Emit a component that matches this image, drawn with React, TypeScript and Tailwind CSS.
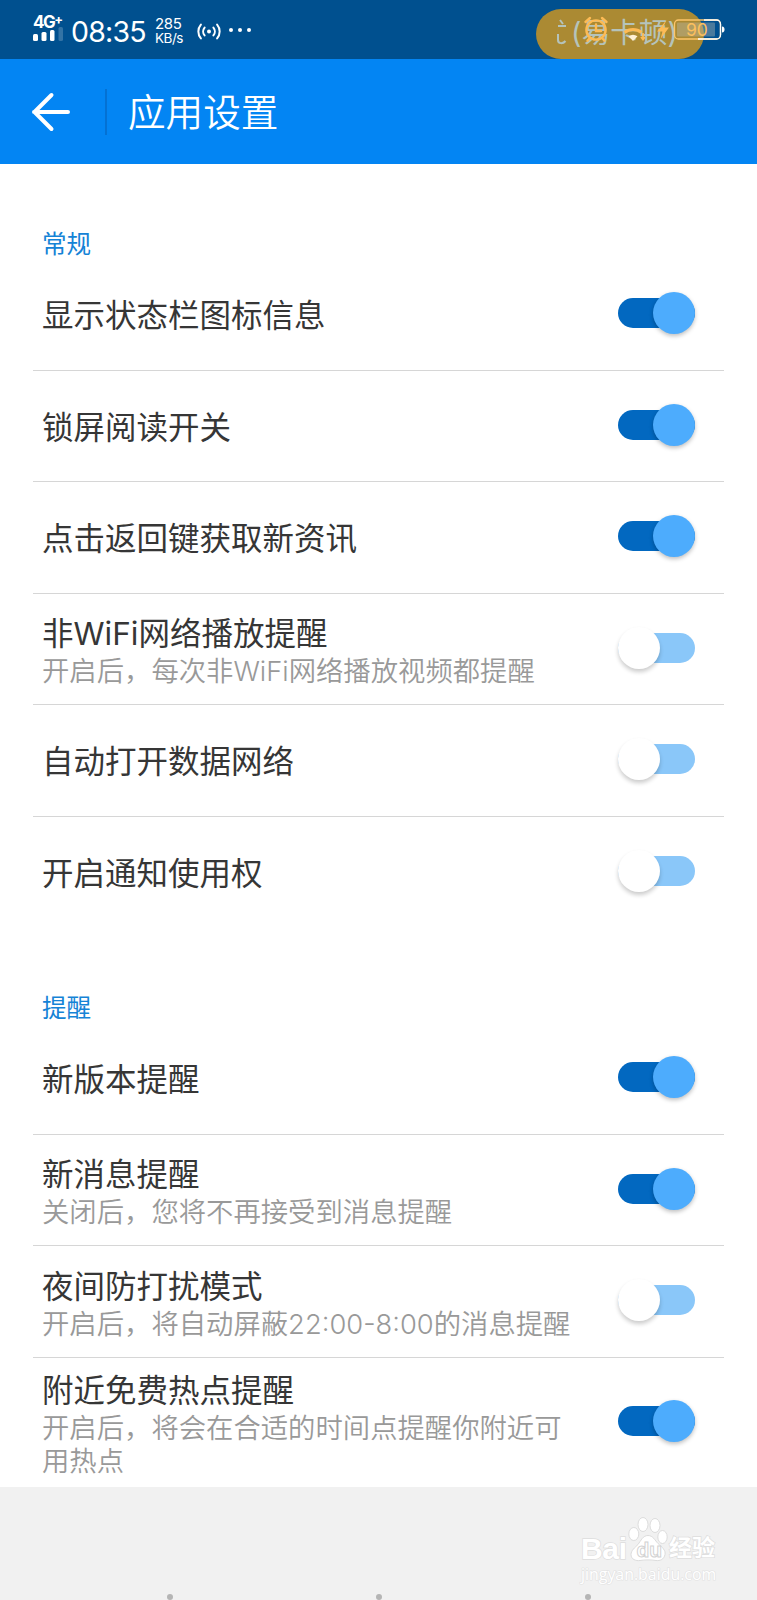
import { useState } from "react";

interface SettingItem {
  id: string;
  title: string;
  description?: string;
  enabled: boolean;
}

interface SettingSection {
  title: string;
  items: SettingItem[];
}

const sections: SettingSection[] = [
  {
    title: "常规",
    items: [
      { id: "status-icon", title: "显示状态栏图标信息", enabled: true },
      { id: "lock-read", title: "锁屏阅读开关", enabled: true },
      { id: "back-news", title: "点击返回键获取新资讯", enabled: true },
      {
        id: "wifi-play",
        title: "非WiFi网络播放提醒",
        description: "开启后，每次非WiFi网络播放视频都提醒",
        enabled: false,
      },
      { id: "auto-data", title: "自动打开数据网络", enabled: false },
      { id: "notify-access", title: "开启通知使用权", enabled: false },
    ],
  },
  {
    title: "提醒",
    items: [
      { id: "new-version", title: "新版本提醒", enabled: true },
      {
        id: "new-message",
        title: "新消息提醒",
        description: "关闭后，您将不再接受到消息提醒",
        enabled: true,
      },
      {
        id: "night-mode",
        title: "夜间防打扰模式",
        description: "开启后，将自动屏蔽22:00-8:00的消息提醒",
        enabled: false,
      },
      {
        id: "hotspot",
        title: "附近免费热点提醒",
        description: "开启后，将会在合适的时间点提醒你附近可用热点",
        enabled: true,
      },
    ],
  },
];

const SignalIcon = () => (
  <svg className="overflow-visible" width="30" height="12" viewBox="0 0 30 12" fill="#fff">
    <rect x="0" y="5" width="5" height="7" rx="1.5" />
    <rect x="8.5" y="3" width="5" height="9" rx="1.5" />
    <rect x="17" y="1" width="4.5" height="11" rx="1.5" />
    <rect x="25.5" y="-2" width="4.5" height="14" rx="1.5" opacity="0.2" />
  </svg>
);

const HotspotIcon = () => (
  <svg width="24" height="17" viewBox="0 0 24 17" fill="none" stroke="#fff" strokeWidth="2" strokeLinecap="round">
    <circle cx="12" cy="8.5" r="2" fill="#fff" stroke="none" />
    <path d="M7.6 4.6a6 6 0 0 0 0 7.8M16.4 4.6a6 6 0 0 1 0 7.8M3.9 1.6a10.6 10.6 0 0 0 0 13.8M20.1 1.6a10.6 10.6 0 0 1 0 13.8" />
  </svg>
);

const StatusIcons = () => (
  <svg className="absolute top-[14px] left-[576px]" width="150" height="32" viewBox="0 0 150 32" fill="none">
    {/* alarm clock */}
    <g stroke="#fdbb55" strokeWidth="2.4" strokeLinecap="round">
      <circle cx="20" cy="16" r="9.6" />
      <path d="M20 10.5V17h5M9.5 8l4.5-4M30.5 8 26 4M13 25l-1.5 1.8M27 25l1.5 1.8" />
    </g>
    {/* wifi */}
    <path d="M48.5 18.5c5-4 12-4 17 0" stroke="#fdbb55" strokeWidth="3" />
    <path d="M52.5 22.3c3-2.2 6-2.2 9 0L57 27z" fill="#fff0d5" />
    <path d="M67 19v6m-2-2 2 2.5 2-2.5" stroke="#fdbb55" strokeWidth="1.8" />
    {/* charging bolt */}
    <path d="M90.5 6 81 17.5h5.5L84.5 25 93 13.5h-6z" fill="#fdbb55" />
    {/* battery */}
    <rect x="101" y="8.5" width="38" height="14" rx="1" fill="#b8b9ae" opacity="0.4" />
    <rect x="98.5" y="6" width="46" height="19" rx="4" stroke="#fdc56a" strokeWidth="1.3" />
    <path d="M128 6h12.5a4 4 0 0 1 4 4v11a4 4 0 0 1-4 4H122" stroke="#fff" strokeWidth="1.3" />
    <path d="M146 12.5c2 .3 2.500 1.200 2.500 3s-.5 2.700-2.500 3z" fill="#fff" />
  </svg>
);

const StatusBar = () => (
  <div className="relative flex h-[59px] items-start bg-[#00508f] pl-[33px] text-white">
    <div className="flex w-[31px] flex-col pt-[15px]">
      <div className="flex h-[14px] items-start text-[17px] leading-[14px] font-bold tracking-[-1.5px]">
        4G
        <span className="-mt-[3px] text-[13px] leading-[14px]">+</span>
      </div>
      <SignalIcon />
    </div>
    <span className="ml-[7px] w-[78px] pt-[15px] text-[28.5px] leading-[34px] tracking-[-0.8px]">08:35</span>
    <div className="ml-[6px] w-[34px] pt-[17px] text-[15px] leading-[14px]">
      <div className="tracking-[-0.3px]">285</div>
      <div className="text-[13.5px] tracking-[-0.5px]">KB/s</div>
    </div>
    <div className="ml-[8px] pt-[23px]">
      <HotspotIcon />
    </div>
    <div className="flex gap-[5px] pt-[28px] pl-[8px]">
      <span className="size-1 rounded-full bg-white" />
      <span className="size-1 rounded-full bg-white" />
      <span className="size-1 rounded-full bg-white" />
    </div>

    {/* floating toast over the system icons */}
    <div className="absolute top-[9px] left-[536px] h-[50px] w-[168px] rounded-full bg-[#ab8a33]" />
    <span className="absolute top-[14px] left-[571px] text-[28.7px] leading-[38px] whitespace-nowrap text-[#b5c3bb]">
      (易卡顿)
    </span>
    <svg className="absolute top-[18px] left-[556px]" width="11" height="28" viewBox="0 0 11 28" fill="none" stroke="#b5c3bb" strokeWidth="2">
      <path d="M4 2l3 4M2 8h8M2 16v6c0 4 5 4 7.500 1" />
    </svg>
    <StatusIcons />
    <span className="absolute top-[20px] left-[686px] text-[17.5px] leading-[20px] text-[#fdc05c]">90</span>
  </div>
);

const AppBar = () => (
  <header className="flex h-[105px] items-center bg-[#0385f3]">
    <button type="button" className="ml-[31px]" aria-label="返回">
      <svg width="40" height="40" viewBox="0 0 40 40" fill="none" stroke="#fff" strokeWidth="4" strokeLinecap="round" strokeLinejoin="round">
        <path d="M37 20H3M20.500 3 3.500 20l17 17" />
      </svg>
    </button>
    <div className="ml-[34px] h-[46px] w-[2px] bg-[#0471d3]" />
    <h1 className="mt-[2px] ml-[21px] text-[37.6px] leading-[50px] font-[350] text-white">应用设置</h1>
  </header>
);

interface ToggleProps {
  checked: boolean;
  onChange: () => void;
}

const Toggle = ({ checked, onChange }: ToggleProps) => (
  <button
    type="button"
    role="switch"
    aria-checked={checked}
    onClick={onChange}
    className={`mb-0.5 flex h-[42px] w-[77px] shrink-0 items-center ${checked ? "justify-end" : "justify-start"}`}
  >
    {checked ? (
      <>
        <span className="-mr-[42px] h-[30px] w-[77px] shrink-0 rounded-full bg-[#0268c0]" />
        <span className="relative size-[42px] shrink-0 rounded-full bg-[#4dacfd] shadow-[0_2px_4px_rgba(0,0,0,0.25)]" />
      </>
    ) : (
      <>
        <span className="relative z-10 size-[42px] shrink-0 rounded-full bg-white shadow-[0_3px_4px_rgba(0,0,0,0.2)]" />
        <span className="-ml-[42px] h-[30px] w-[77px] shrink-0 rounded-full bg-[#8ac7f9]" />
      </>
    )}
  </button>
);

interface SettingRowProps {
  item: SettingItem;
  last: boolean;
  checked: boolean;
  onToggle: () => void;
}

const SettingRow = ({ item, last, checked, onToggle }: SettingRowProps) => (
  <li
    className={`mx-[33px] flex min-h-[111.5px] items-center justify-between border-b pr-[29px] pl-[9px] ${
      last ? "border-transparent" : "border-[#d6d6d6]"
    }`}
  >
    <div className="w-[535px] pt-[4px]">
      <div className="text-[31.5px] leading-[44px] text-[#363636]">{item.title}</div>
      {item.description && (
        <div className="text-[27.35px] leading-[32.7px] font-[350] text-[#999]">{item.description}</div>
      )}
    </div>
    <Toggle checked={checked} onChange={onToggle} />
  </li>
);

const Watermark = () => (
  <div className="absolute right-[40px] bottom-[15px] w-[136px] text-white">
    <div className="flex h-[46px] items-end">
      <span className="w-[47px] font-['Liberation_Sans'] text-[30px] leading-[26px] font-bold tracking-[-0.3px] [-webkit-text-stroke:1.5px_#dedede] [paint-order:stroke]">
        Bai
      </span>
      <svg className="shrink-0" width="40" height="46" viewBox="0 0 40 46" fill="#fff" stroke="#dcdcdc" strokeWidth="1">
        <ellipse cx="5.800" cy="18" rx="5" ry="6.500" />
        <ellipse cx="15" cy="8.500" rx="5" ry="7" />
        <ellipse cx="27" cy="9.500" rx="5" ry="7" />
        <ellipse cx="34.500" cy="21" rx="4.700" ry="6.500" />
        <path d="M20 19.500c5 0 7 5 10 8 4 3.500 8 7 7 11-1 5-5 6.500-9 6-5-.8-11-.8-16 0-4 .6-9-1-9-6 0-4 4-7 7-10 3-4 5-9 10-9z" />
        <text x="8.500" y="41" fontSize="21" fontWeight="700" fontFamily="Liberation Sans" fill="#fff" stroke="#d2d2d2">
          du
        </text>
      </svg>
      <span className="ml-[1px] text-[23px] leading-[28px] font-bold whitespace-nowrap [-webkit-text-stroke:1.5px_#dedede] [paint-order:stroke]">
        经验
      </span>
    </div>
    <div className="mt-[1px] font-['Open_Sans'] text-[15.9px] leading-[22px] [-webkit-text-stroke:1.2px_#e2e2e2] [paint-order:stroke]">
      jingyan.baidu.com
    </div>
  </div>
);

const BottomArea = () => (
  <footer className="relative flex flex-1 items-end justify-between bg-[#f1f1f1] pr-[166px] pl-[167px]">
    <span className="size-1.5 rounded-full bg-[#b5b5b5]" />
    <span className="size-1.5 rounded-full bg-[#b5b5b5]" />
    <span className="size-1.5 rounded-full bg-[#b5b5b5]" />
    <Watermark />
  </footer>
);

const App = () => {
  const [values, setValues] = useState<Record<string, boolean>>(() =>
    Object.fromEntries(sections.flatMap((s) => s.items.map((item) => [item.id, item.enabled])))
  );

  const handleToggle = (id: string) => {
    setValues((prev) => ({ ...prev, [id]: !prev[id] }));
  };

  return (
    <div className="flex h-[1600px] w-[757px] flex-col overflow-hidden bg-white font-['Inter','Noto_Sans_CJK_SC',sans-serif]">
      <StatusBar />
      <AppBar />
      <main className="flex h-[1323px] flex-col">
        {sections.map((section) => (
          <section key={section.title} className="flex flex-col last:flex-1">
            <h2 className="flex h-[95px] items-end pl-[42px] text-[24.6px] leading-[29px] text-[#1583d6]">
              {section.title}
            </h2>
            <ul className="flex flex-1 flex-col [&>li:last-child]:flex-1">
              {section.items.map((item, index) => (
                <SettingRow
                  key={item.id}
                  item={item}
                  last={index === section.items.length - 1}
                  checked={values[item.id]}
                  onToggle={() => handleToggle(item.id)}
                />
              ))}
            </ul>
          </section>
        ))}
      </main>
      <BottomArea />
    </div>
  );
};

export default App;
